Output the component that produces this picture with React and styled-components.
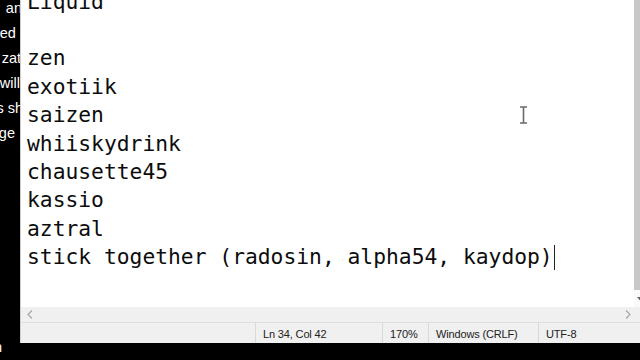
import React from "react";
import styled, { createGlobalStyle } from "styled-components";

const Global = createGlobalStyle`
  html, body { margin: 0; padding: 0; background: #000; }
  body { width: 640px; height: 360px; overflow: hidden; }
`;

const Screen = styled.div`
  width: 640px;
  height: 360px;
  background: #000;
  display: flex;
  overflow: hidden;
`;

const Strip = styled.div`
  width: 20px;
  flex: none;
  overflow: hidden;
  display: flex;
  flex-direction: column;
  margin-top: -4px;
  font-family: "Liberation Sans", Arial, sans-serif;
  font-size: 14.5px;
  color: #fff;
`;

const StripLine = styled.div`
  height: 25px;
  line-height: 25px;
  display: flex;
  justify-content: flex-end;
  white-space: nowrap;
  margin-right: ${(p) => -p.$over}px;
`;

const StripFoot = styled.div`
  margin-top: auto;
  margin-bottom: 6px;
  margin-left: -6px;
  line-height: 14px;
  height: 14px;
  white-space: nowrap;
`;

const Column = styled.div`
  flex: 1;
  display: flex;
  flex-direction: column;
  min-width: 0;
`;

const Window = styled.div`
  height: 343px;
  display: flex;
  flex-direction: column;
  background: #fff;
  border-left: 1px solid #cfcfcf;
  box-sizing: border-box;
`;

const Editor = styled.div`
  flex: 1;
  display: flex;
  min-height: 0;
  position: relative;
`;

const TextArea = styled.div`
  flex: 1;
  overflow: hidden;
  padding-left: 6px;
  font-family: "DejaVu Sans Mono", "Liberation Mono", monospace;
  font-size: 21.3px;
  line-height: 28.4px;
  color: #0c0c0c;
`;

const Lines = styled.div`
  margin-top: -12.4px;
`;

const Line = styled.div`
  height: 28.4px;
  white-space: pre;
  display: flex;
  align-items: center;
`;

const Caret = styled.span`
  display: inline-block;
  width: 1px;
  height: 25px;
  background: #222;
  margin-left: 1px;
`;

const VScroll = styled.div`
  width: 6px;
  flex: none;
  display: flex;
  flex-direction: column;
  background: #f0f0f0;
`;

const VThumb = styled.div`
  flex: 1;
  background: #c8c8c8;
`;

const VArrow = styled.div`
  height: 17px;
  flex: none;
  display: flex;
  align-items: center;
  justify-content: flex-end;
  background: #fafafa;
  svg { display: block; margin-right: -3px; }
`;

const HScroll = styled.div`
  height: 15px;
  flex: none;
  background: #f0f0f0;
  display: flex;
  align-items: center;
  justify-content: space-between;
  padding: 0 9px 0 6px;
  border-bottom: 1px solid #dedede;
`;

const Status = styled.div`
  height: 20px;
  flex: none;
  background: #f0f0f0;
  display: flex;
  font-family: "Liberation Sans", Arial, sans-serif;
  font-size: 11px;
  letter-spacing: -0.15px;
  color: #222;
`;

const Cell = styled.div`
  width: ${(p) => (p.$w ? `${p.$w}px` : "auto")};
  flex: ${(p) => (p.$grow ? 1 : "none")};
  box-sizing: border-box;
  border-left: ${(p) => (p.$sep ? "1px solid #d9d9d9" : "none")};
  padding-left: 7px;
  padding-top: 1px;
  display: flex;
  align-items: center;
  white-space: nowrap;
`;

const IBeam = styled.svg`
  position: absolute;
  left: 498px;
  top: 106px;
`;

const Black = styled.div`
  flex: 1;
  background: #000;
`;

const lines = [
  "Liquid",
  "",
  "zen",
  "exotiik",
  "saizen",
  "whiiskydrink",
  "chausette45",
  "kassio",
  "aztral",
];

const Chevron = ({ dir }) => (
  <svg width="6" height="9" viewBox="0 0 6 9">
    <path
      d={dir === "left" ? "M5 0.5 L1 4.5 L5 8.5" : "M1 0.5 L5 4.5 L1 8.5"}
      fill="none"
      stroke="#a6a6a6"
      strokeWidth="1.2"
    />
  </svg>
);

export default function App() {
  return (
    <>
      <Global />
      <Screen>
        <Strip>
          <StripLine $over={2}>an</StripLine>
          <StripLine $over={8}>ed o</StripLine>
          <StripLine $over={1}>zat</StripLine>
          <StripLine $over={0}>will</StripLine>
          <StripLine $over={3}>s sh</StripLine>
          <StripLine $over={-5}>ge</StripLine>
          <StripFoot>n</StripFoot>
        </Strip>
        <Column>
          <Window>
            <Editor>
              <TextArea>
                <Lines>
                  {lines.map((l, i) => (
                    <Line key={i}>{l}</Line>
                  ))}
                  <Line>
                    stick together (radosin, alpha54, kaydop)
                    <Caret />
                  </Line>
                </Lines>
              </TextArea>
              <VScroll>
                <VThumb />
                <VArrow>
                  <svg width="6" height="4" viewBox="0 0 6 4">
                    <path d="M0 0 L6 0 L3 3.5 Z" fill="#606060" />
                  </svg>
                </VArrow>
              </VScroll>
              <IBeam width="9" height="18" viewBox="0 0 9 18">
                <path
                  d="M1 1 H8 M4.5 1 V17 M1 17 H8"
                  stroke="#6a6a6a"
                  strokeWidth="1.6"
                  fill="none"
                />
              </IBeam>
            </Editor>
            <HScroll>
              <Chevron dir="left" />
              <Chevron dir="right" />
            </HScroll>
            <Status>
              <Cell $w={234} />
              <Cell $w={127} $sep>
                Ln 34, Col 42
              </Cell>
              <Cell $w={46} $sep>
                170%
              </Cell>
              <Cell $w={110} $sep>
                Windows (CRLF)
              </Cell>
              <Cell $grow $sep>
                UTF-8
              </Cell>
            </Status>
          </Window>
          <Black />
        </Column>
      </Screen>
    </>
  );
}
